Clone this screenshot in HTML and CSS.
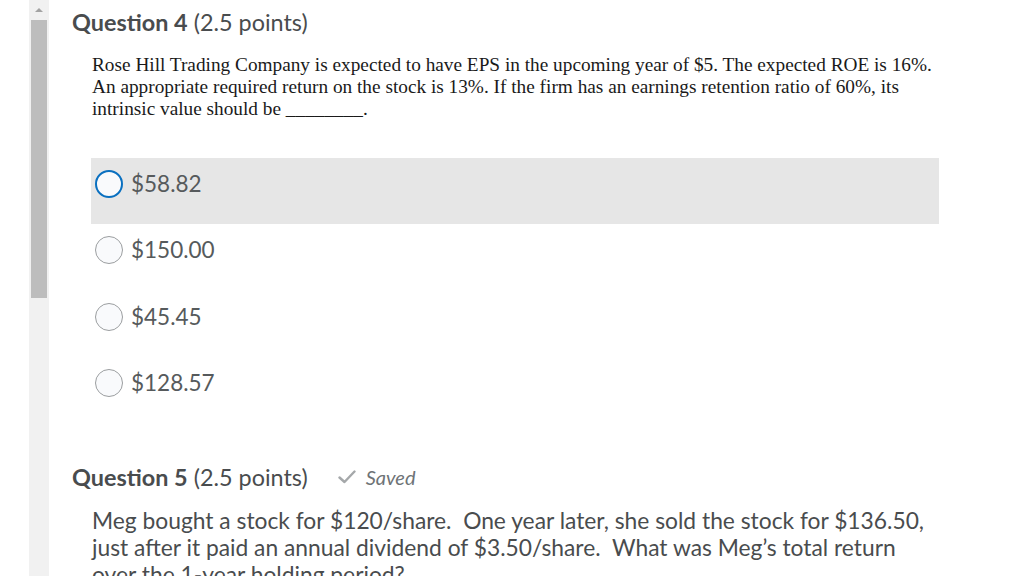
FILE: index.html
```html
<!DOCTYPE html>
<html>
<head>
<meta charset="utf-8">
<link rel="stylesheet" href="styles.css">
</head>
<body>
<div class="page">
  <div class="scrollbar">
    <div class="arrow"></div>
    <div class="thumb"></div>
  </div>
  <main class="content">
    <section class="question">
      <h2 class="q-title"><strong>Question 4</strong> (2.5 points)</h2>
      <p class="q-text">Rose Hill Trading Company is expected to have EPS in the upcoming year of $5. The expected ROE is 16%. An appropriate required return on the stock is 13%. If the firm has an earnings retention ratio of 60%, its intrinsic value should be ________.</p>
      <ul class="options">
        <li class="option selected"><span class="radio"></span><span class="label">$58.82</span></li>
        <li class="option"><span class="radio"></span><span class="label">$150.00</span></li>
        <li class="option"><span class="radio"></span><span class="label">$45.45</span></li>
        <li class="option"><span class="radio"></span><span class="label">$128.57</span></li>
      </ul>
    </section>
    <section class="question q5">
      <h2 class="q-title"><strong>Question 5</strong> (2.5 points)<span class="saved"><svg class="check" viewBox="0 0 18 14" width="18" height="14"><path d="M1.5 7.5 L6.5 12 L16.5 1.5" fill="none" stroke="#a5a8aa" stroke-width="2.4" stroke-linecap="round" stroke-linejoin="round"/></svg><em>Saved</em></span></h2>
      <p class="q5-text">Meg bought a stock for $120/share.&nbsp; One year later, she sold the stock for $136.50, just after it paid an annual dividend of $3.50/share.&nbsp; What was Meg’s total return over the 1-year holding period?</p>
    </section>
  </main>
</div>
</body>
</html>
```
FILE: styles.css
```css
html, body {
  margin: 0;
  padding: 0;
  background: #ffffff;
  height: 100%;
  overflow: hidden;
}

.page {
  display: flex;
  height: 576px;
  overflow: hidden;
  font-family: Lato, "Liberation Sans", sans-serif;
  color: #494c4e;
}

.scrollbar {
  margin-left: 29px;
  width: 20px;
  height: 576px;
  background: #f1f1f1;
  display: flex;
  flex-direction: column;
  align-items: center;
  flex-shrink: 0;
}

.arrow {
  margin-top: 8px;
  width: 0;
  height: 0;
  border-left: 4px solid transparent;
  border-right: 4px solid transparent;
  border-bottom: 4px solid #a3a3a3;
}

.thumb {
  margin-top: 8px;
  width: 16px;
  height: 278px;
  background: #bdbdbd;
}

.content {
  margin-left: 23px;
  width: 867px;
}

.q-title {
  margin: 8px 0 0;
  font-size: 23.4px;
  line-height: 28px;
  font-weight: 400;
  color: #494c4e;
}

.q-title strong {
  font-weight: 700;
}

.q-text {
  margin: 18px 0 0 20px;
  font-family: "Liberation Serif", "Times New Roman", serif;
  font-size: 19.3px;
  line-height: 22px;
  color: #1a1a1a;
}

.options {
  list-style: none;
  margin: 38px 0 0 19px;
  padding: 0;
  width: 848px;
}

.option {
  height: 66.3px;
  box-sizing: border-box;
  padding: 12px 4px 0;
  display: flex;
  align-items: flex-start;
}

.option.selected {
  background: #e6e6e6;
}

.radio {
  width: 28px;
  height: 28px;
  box-sizing: border-box;
  border-radius: 50%;
  border: 1px solid #9b9ea0;
  background: #f9fafc;
  margin-right: 8px;
}

.option.selected .radio {
  border: 2px solid #0a70c0;
}

.label {
  font-size: 22.5px;
  line-height: 28px;
  color: #565a5c;
}

.q5 {
  margin-top: 40px;
}

.saved {
  display: inline-flex;
  align-items: center;
  margin-left: 30px;
  font-size: 20px;
  color: #6e7376;
  vertical-align: top;
  height: 28px;
}

.check {
  margin-right: 10px;
}

.saved em {
  font-style: italic;
}

.q5-text {
  margin: 16px 0 0 20px;
  font-size: 22.8px;
  line-height: 27px;
  color: #494c4e;
}
```
